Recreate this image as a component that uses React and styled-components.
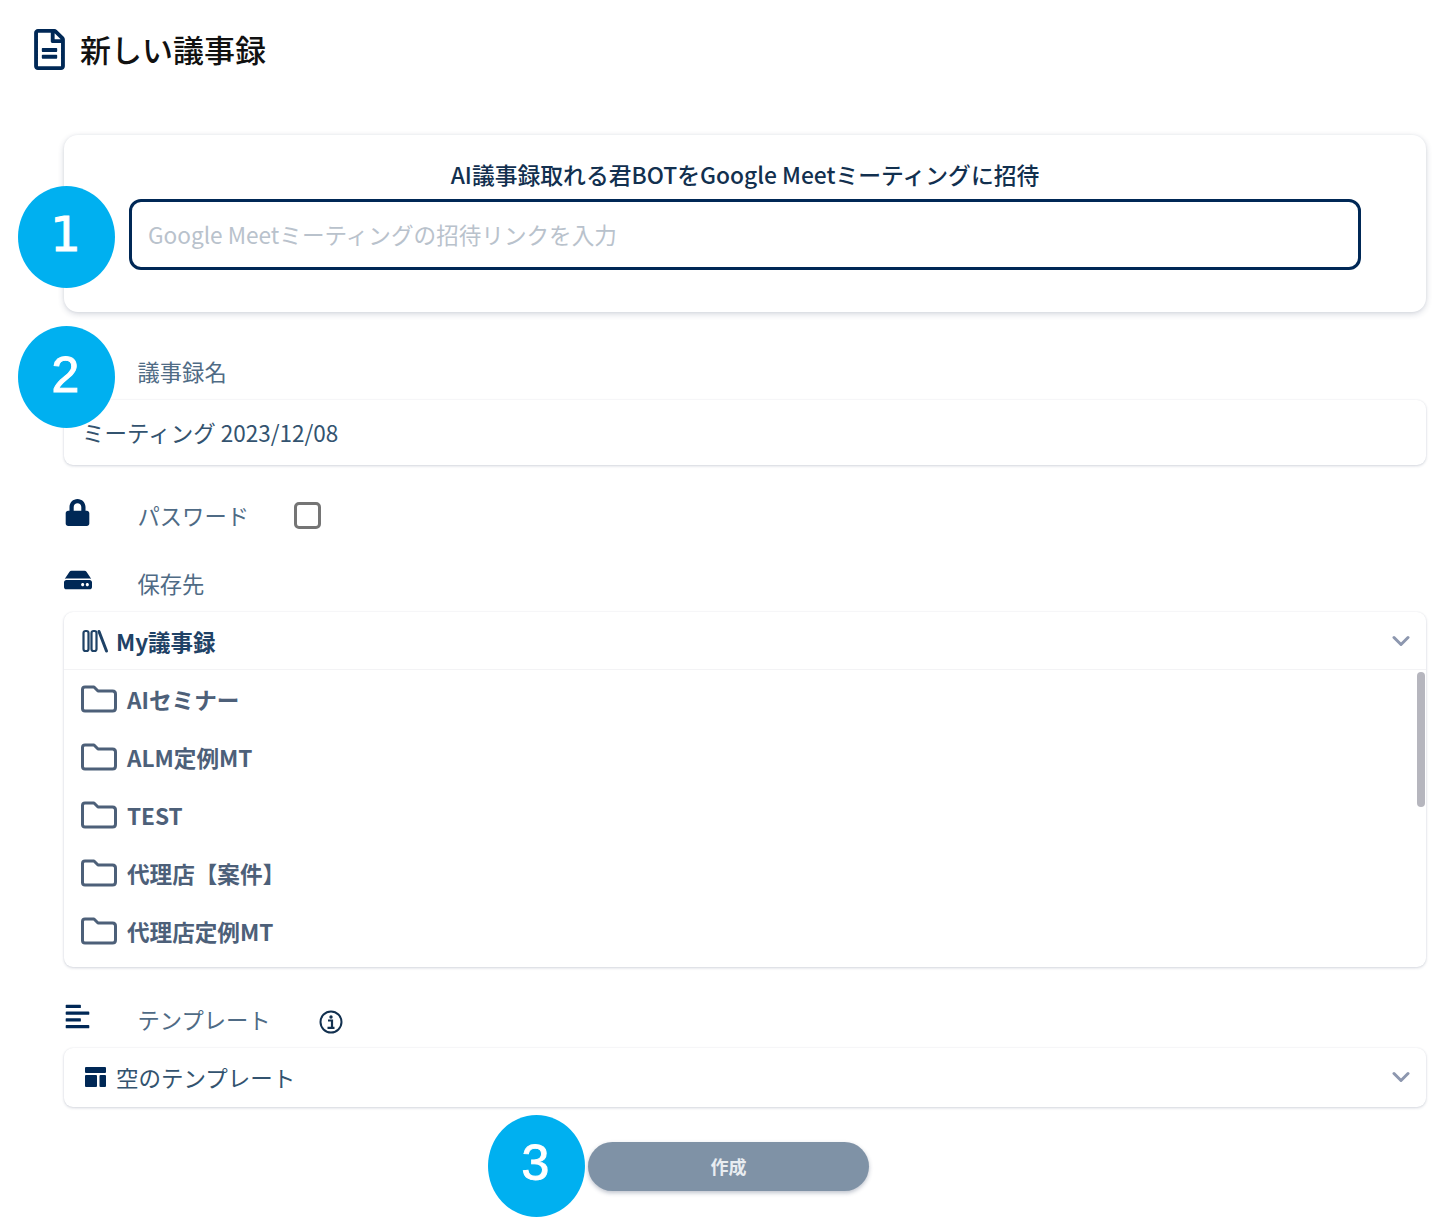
import React from "react";
import styled, { createGlobalStyle } from "styled-components";
import { FaLock, FaHdd, FaAlignLeft, FaRegFileAlt } from "react-icons/fa";

const GlobalStyle = createGlobalStyle`
  html, body {
    margin: 0;
    padding: 0;
    background: #fff;
  }
  * {
    box-sizing: border-box;
  }
`;

const navy = "#002856";

const Page = styled.div`
  position: relative;
  width: 1449px;
  height: 1223px;
  overflow: hidden;
  padding: 28px 23px 0 64px;
  font-family: "Noto Sans CJK JP", "Noto Sans", sans-serif;
  color: #33536f;
`;

const Header = styled.header`
  display: flex;
  align-items: center;
  gap: 15px;
  height: 42px;
  margin-left: -30px;
  color: #111;
  font-size: 31px;
  font-weight: 500;
  line-height: 42px;

  svg {
    width: 31px;
    height: 41px;
    color: ${navy};
  }
`;

const InviteCard = styled.section`
  height: 177px;
  margin-top: 65px;
  padding: 24px 65px 0;
  border-radius: 14px;
  background: #fff;
  box-shadow: 0 2px 6px rgba(40, 55, 90, 0.2), 0 0 3px rgba(40, 55, 90, 0.06);
`;

const InviteTitle = styled.h2`
  margin: 0 0 8px;
  font-size: 22.8px;
  font-weight: 500;
  line-height: 32px;
  text-align: center;
  color: #12304f;
`;

const LinkInput = styled.input`
  display: block;
  width: 100%;
  height: 71px;
  padding: 0 16px;
  border: 3px solid ${navy};
  border-radius: 12px;
  outline: none;
  font-family: inherit;
  font-size: 22.6px;

  &::placeholder {
    color: #b9c2cc;
    opacity: 1;
  }
`;

const Label = styled.div`
  display: flex;
  align-items: center;
  height: ${(p) => p.$height}px;
  margin-top: ${(p) => p.$top}px;
  font-size: 22.3px;
  color: #4f6b85;
`;

const LabelIcon = styled.span`
  display: flex;
  flex: 0 0 73.5px;
  align-items: center;
  margin-top: ${(p) => p.$shift || 0}px;
  color: ${navy};

  svg {
    display: block;
    width: ${(p) => p.$size}px;
    height: ${(p) => p.$size}px;
  }
`;

const Field = styled.div`
  display: flex;
  align-items: center;
  height: ${(p) => p.$height}px;
  padding: 0 16px 2px 18px;
  border-radius: 9px;
  background: #fff;
  box-shadow: 0 1px 3px rgba(40, 55, 90, 0.2), 0 0 2px rgba(40, 55, 90, 0.06);
  font-size: 22.5px;
  color: #33536f;
`;

const Checkbox = styled.span`
  width: 27px;
  height: 27px;
  margin: 1px 0 0 45px;
  border: 3px solid #757575;
  border-radius: 5px;
`;

const Accordion = styled.div`
  position: relative;
  height: 355px;
  border-radius: 9px;
  background: #fff;
  box-shadow: 0 1px 3px rgba(40, 55, 90, 0.2), 0 0 2px rgba(40, 55, 90, 0.06);
`;

const AccordionHead = styled.div`
  display: flex;
  align-items: center;
  gap: 7px;
  height: 58px;
  padding: 0 16px 0 18px;
  border-bottom: 1px solid #f3f3f5;
  font-size: 22.5px;
  font-weight: 700;
  color: #1f4266;
`;

const FolderRow = styled.div`
  display: flex;
  align-items: center;
  gap: 10px;
  height: 58px;
  padding-left: 17px;
  font-size: 22.6px;
  font-weight: 700;
  color: #4d6079;
`;

const Scrollbar = styled.span`
  position: absolute;
  top: 60px;
  right: 1px;
  width: 8px;
  height: 135px;
  border-radius: 4px;
  background: #b6b6be;
`;

const Chevron = styled.svg`
  width: 18px;
  height: 12px;
  margin-left: auto;
  fill: none;
  stroke: #8d97af;
  stroke-width: 3;
  stroke-linecap: round;
  stroke-linejoin: round;
`;

const TemplateIconSlot = styled.span`
  display: flex;
  margin-left: 3px;
`;

const TemplateName = styled.span`
  margin-left: 10px;
`;

const InfoIcon = styled.svg`
  width: 24px;
  height: 24px;
  margin: 6px 0 0 48px;
  color: #12304f;
`;

const Footer = styled.div`
  display: flex;
  margin-top: 35px;
  padding-left: 524px;
`;

const CreateButton = styled.button`
  width: 281px;
  height: 49px;
  padding: 0 0 2px;
  border: none;
  border-radius: 25px;
  background: #7f92a6;
  box-shadow: 0 2px 4px rgba(40, 55, 90, 0.3);
  font-family: inherit;
  font-size: 18px;
  font-weight: 700;
  color: #e9edf1;
`;

const Badge = styled.div`
  position: absolute;
  left: ${(p) => p.$x}px;
  top: ${(p) => p.$y}px;
  display: flex;
  align-items: center;
  justify-content: center;
  width: 97px;
  height: 102px;
  padding: 0 2px ${(p) => p.$lift}px 0;
  border-radius: 50%;
  background: #00b0f0;
  color: #fff;
  font-family: ${(p) => p.$font};
  font-size: ${(p) => p.$size}px;
  line-height: 1;
  -webkit-text-stroke: 1px #fff;
`;

const folders = ["AIセミナー", "ALM定例MT", "TEST", "代理店【案件】", "代理店定例MT"];

const FolderIcon = () => (
  <svg width="36" height="28" viewBox="0 0 36 28" fill="none" stroke="#4d6079" strokeWidth="3" strokeLinejoin="round">
    <path d="M1.5 4.5q0-2.5 2.5-2.5h9l4 4h14.500q3 0 3 3v14q0 3-3 3h-27.500q-2.500 0-2.500-2.500z" />
  </svg>
);

const ShelfIcon = () => (
  <svg width="27" height="24" viewBox="0 0 27 24" fill="none" stroke="#1f4266" strokeWidth="2.2">
    <rect x="1.500" y="2" width="5" height="20" rx="2" />
    <rect x="9.500" y="2" width="5" height="20" rx="2" />
    <path d="M17 2.500l7.500 19.500" strokeWidth="3" strokeLinecap="round" />
  </svg>
);

const LayoutIcon = () => (
  <svg width="21" height="20" viewBox="0 0 21 20" fill={navy}>
    <rect x="0" y="0" width="21" height="6" rx="1" />
    <rect x="0" y="8" width="12" height="12" rx="1" />
    <rect x="14.500" y="8" width="6.500" height="12" rx="1" />
  </svg>
);

export default function App() {
  return (
    <Page>
      <GlobalStyle />
      <Header>
        <FaRegFileAlt />
        新しい議事録
      </Header>

      <InviteCard>
        <InviteTitle>AI議事録取れる君BOTをGoogle Meetミーティングに招待</InviteTitle>
        <LinkInput placeholder="Google Meetミーティングの招待リンクを入力" />
      </InviteCard>

      <Label $top={30} $height={58}>
        <LabelIcon />
        議事録名
      </Label>
      <Field $height={65}>ミーティング 2023/12/08</Field>

      <Label $top={29} $height={42}>
        <LabelIcon $size={27} $shift={-5}>
          <FaLock />
        </LabelIcon>
        パスワード
        <Checkbox />
      </Label>

      <Label $top={18} $height={58}>
        <LabelIcon $size={28} $shift={-6}>
          <FaHdd />
        </LabelIcon>
        保存先
      </Label>
      <Accordion>
        <AccordionHead>
          <ShelfIcon />
          My議事録
          <Chevron viewBox="0 0 18 12">
            <path d="M2 2.500l7 7 7-7" />
          </Chevron>
        </AccordionHead>
        {folders.map((name) => (
          <FolderRow key={name}>
            <FolderIcon />
            {name}
          </FolderRow>
        ))}
        <Scrollbar />
      </Accordion>

      <Label $top={23} $height={58}>
        <LabelIcon $size={27} $shift={-6}>
          <FaAlignLeft />
        </LabelIcon>
        テンプレート
        <InfoIcon viewBox="0 0 24 24" fill="none">
          <circle cx="12" cy="12" r="10.500" stroke="currentColor" strokeWidth="2" />
          <circle cx="12" cy="7" r="1.700" fill="currentColor" />
          <path d="M9 10.500h4v7M8.500 17.800h7" stroke="currentColor" strokeWidth="2.200" />
        </InfoIcon>
      </Label>
      <Field $height={59}>
        <TemplateIconSlot>
          <LayoutIcon />
        </TemplateIconSlot>
        <TemplateName>空のテンプレート</TemplateName>
        <Chevron viewBox="0 0 18 12">
          <path d="M2 2.500l7 7 7-7" />
        </Chevron>
      </Field>

      <Footer>
        <CreateButton>作成</CreateButton>
      </Footer>

      <Badge $x={18} $y={186} $size={48} $lift={7} $font='"DejaVu Sans", sans-serif'>1</Badge>
      <Badge $x={18} $y={326} $size={50} $lift={5} $font='"Liberation Sans", sans-serif'>2</Badge>
      <Badge $x={488} $y={1115} $size={50} $lift={6} $font='"Liberation Sans", sans-serif'>3</Badge>
    </Page>
  );
}
